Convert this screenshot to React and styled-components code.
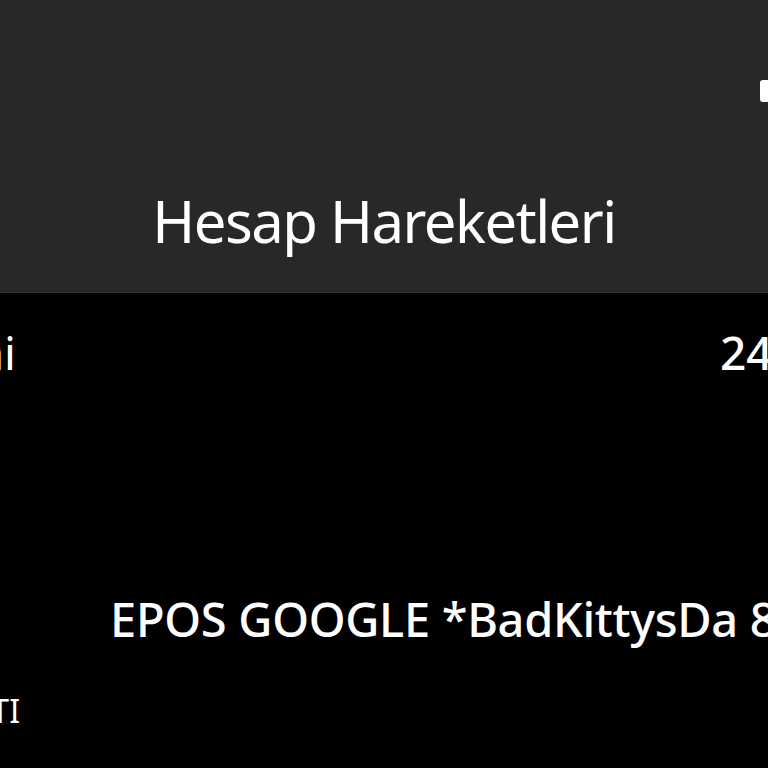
import React from "react";
import styled, { createGlobalStyle } from "styled-components";

const GlobalStyle = createGlobalStyle`
  html, body {
    margin: 0;
    padding: 0;
    background: #000000;
    overflow: hidden;
  }
  body {
    width: 768px;
    height: 768px;
    font-family: "Noto Sans", "Open Sans", sans-serif;
    color: #ffffff;
  }
`;

const Screen = styled.div`
  width: 768px;
  height: 768px;
  overflow: hidden;
  display: flex;
  flex-direction: column;
  background: #000000;
`;

/* üst başlık */
const Header = styled.header`
  height: 293px;
  box-sizing: border-box;
  padding: 80px 0 42px;
  background: #282828;
  border-bottom: 1px solid #303030;
  display: flex;
  flex-direction: column;
`;

const TopBar = styled.div`
  display: flex;
  justify-content: flex-end;
  height: 22px;
`;

const IconSlot = styled.div`
  width: 8px;
  height: 22px;
  flex-shrink: 0;
  overflow: visible;
`;

const Title = styled.h1`
  margin: auto 0 0;
  font-size: 58px;
  font-weight: 400;
  line-height: 1;
  text-align: center;
  color: #ffffff;
  letter-spacing: -1.5px;
`;

/* liste */
const List = styled.main`
  display: flex;
  flex-direction: column;
  padding-top: 36px;
`;

const Row = styled.div`
  display: flex;
  align-items: baseline;
  justify-content: space-between;
  font-size: ${(p) => p.size || 46}px;
  line-height: 1;
  margin-top: ${(p) => p.top || 0}px;
`;

const Label = styled.div`
  width: ${(p) => p.width}px;
  flex-shrink: 0;
  display: flex;
  justify-content: flex-end;
  white-space: nowrap;
`;

const Value = styled.div`
  width: 48px;
  flex-shrink: 0;
  white-space: nowrap;
  font-weight: 500;
`;

const Description = styled.div`
  margin-top: 221px;
  padding-left: 110px;
  font-size: 47px;
  line-height: 1;
  font-weight: 500;
  white-space: nowrap;
  letter-spacing: -0.3px;
`;

function ActionIcon() {
  return (
    <svg width="26" height="22" viewBox="0 0 26 22">
      <rect x="0" y="0" width="26" height="22" rx="3" fill="#ffffff" />
    </svg>
  );
}

export default function App() {
  return (
    <>
      <GlobalStyle />
      <Screen>
        <Header>
          <TopBar>
            <IconSlot>
              <ActionIcon />
            </IconSlot>
          </TopBar>
          <Title>Hesap Hareketleri</Title>
        </Header>
        <List>
          <Row>
            <Label width={16}>İşlem Tarihi</Label>
            <Value>24.05.2023</Value>
          </Row>
          <Description>EPOS GOOGLE *BadKittysDa 8,99 TL</Description>
          <Row size={32} top={52}>
            <Label width={20}>HESAP ÖZETI</Label>
          </Row>
        </List>
      </Screen>
    </>
  );
}
